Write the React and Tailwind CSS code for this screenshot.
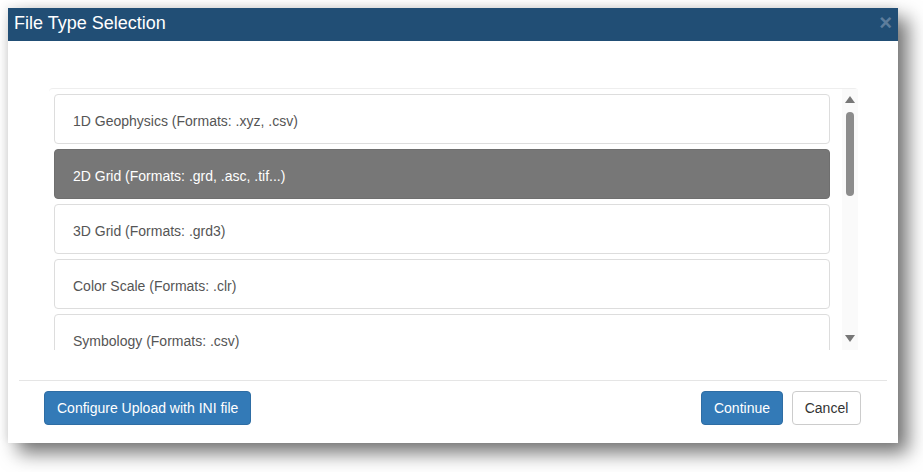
import React from 'react';

const types = [
  '1D Geophysics (Formats: .xyz, .csv)',
  '2D Grid (Formats: .grd, .asc, .tif...)',
  '3D Grid (Formats: .grd3)',
  'Color Scale (Formats: .clr)',
  'Symbology (Formats: .csv)',
];

const App = () => {
  const selected = 1;
  return (
    <div className="w-[923px] h-[472px] bg-white p-2 font-['Liberation_Sans',Arial,sans-serif]">
      <div className="w-[890px] h-[435px] bg-white flex flex-col shadow-[10px_10px_18px_rgba(0,0,0,0.55),-2px_-2px_8px_rgba(0,0,0,0.08)]">
        <div className="h-[33px] bg-[#214e75] flex items-center justify-between pl-[6px] pr-[6px] pb-[4px]">
          <span className="text-white text-[18px] leading-none">File Type Selection</span>
          <span className="text-[#5d7d9c] text-[22px] font-bold leading-none">×</span>
        </div>
        <div className="flex-1 pt-[47px] pl-[41px] pr-[40px]">
          <div className="flex h-[262px] border-t border-[#eee] rounded-t-[4px]">
            <div className="flex-1 overflow-hidden pt-[5px] pl-[5px] pr-[12px] flex flex-col gap-[5px]">
              {types.map((t, i) => (
                <div
                  key={t}
                  className={
                    i === selected
                      ? 'h-[50px] shrink-0 flex items-center pt-[5px] pl-[18px] rounded-[4px] border border-[#6f6f6f] bg-[#777] text-white text-[14px]'
                      : 'h-[50px] shrink-0 flex items-center pt-[5px] pl-[18px] rounded-[4px] border border-[#ddd] bg-white text-[#555] text-[14px]'
                  }
                >
                  {t}
                </div>
              ))}
            </div>
            <div className="w-[16px] bg-[#fafafa] flex flex-col items-center pt-[7px] pb-[8px]">
              <svg width="10" height="7" viewBox="0 0 10 7"><path d="M0 7 L5 0 L10 7 Z" fill="#777" /></svg>
              <div className="w-[8px] h-[84px] mt-[9px] rounded-full bg-[#8c8c8c]" />
              <div className="flex-1" />
              <svg width="10" height="7" viewBox="0 0 10 7"><path d="M0 0 L5 7 L10 0 Z" fill="#777" /></svg>
            </div>
          </div>
        </div>
        <div className="mx-[11px] border-t border-[#e5e5e5] h-[63px] flex items-start justify-between pt-[10px] pl-[25px] pr-[26px]">
          <button className="h-[34px] px-[12px] rounded-[4px] bg-[#337ab7] border border-[#2e6da4] text-white text-[14px]">
            Configure Upload with INI file
          </button>
          <div className="flex gap-[9px]">
            <button className="h-[34px] w-[82px] rounded-[4px] bg-[#337ab7] border border-[#2e6da4] text-white text-[14px]">
              Continue
            </button>
            <button className="h-[34px] w-[69px] rounded-[4px] bg-white border border-[#ccc] text-[#333] text-[14px]">
              Cancel
            </button>
          </div>
        </div>
      </div>
    </div>
  );
};

export default App;
